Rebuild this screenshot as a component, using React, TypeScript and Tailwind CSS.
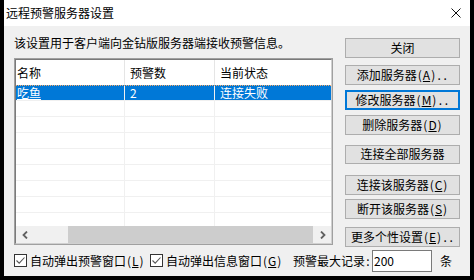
import type { ReactNode } from 'react';

const font = "font-['Noto_Sans_CJK_SC','Noto_Sans_CJK_JP',sans-serif]";

// half-width cell like the bitmap font of the original dialog
function H({ children }: { children: ReactNode }) {
  return <span className="inline-block w-[6px] text-center">{children}</span>;
}

function Mn({ k, dots }: { k: string; dots?: boolean }) {
  return (
    <>
      <H>(</H>
      <span className="inline-block min-w-[6px] text-center underline">{k}</span>
      <H>)</H>
      {dots && (
        <>
          <H>.</H>
          <H>.</H>
        </>
      )}
    </>
  );
}

function Btn({ children, focused, className = '' }: { children: ReactNode; focused?: boolean; className?: string }) {
  return (
    <div
      className={`flex h-[20px] w-[115px] items-center justify-center whitespace-nowrap bg-[#e1e1e1] text-[12px] leading-none text-black ${
        focused ? 'border-2 border-[#0078d7]' : 'border border-[#adadad]'
      } ${className}`}
    >
      {children}
    </div>
  );
}

function CheckBox() {
  return (
    <div className="flex h-[13px] w-[13px] shrink-0 items-center justify-center border border-[#333333] bg-white">
      <svg width="11" height="11" viewBox="0 0 11 11">
        <path d="M1.5 5.5 L4.2 8.2 L9.5 2.5" fill="none" stroke="#555555" strokeWidth="1.1" />
      </svg>
    </div>
  );
}

function Row({ selected }: { selected?: boolean }) {
  return (
    <div
      className={`flex h-[16px] shrink-0 border-b border-[#f0f0f0] text-[12px] leading-none ${
        selected ? 'bg-[#0078d7] text-white' : ''
      }`}
    >
      <div className="flex w-[109px] items-center border-r border-[#f0f0f0] pl-[1px]">
        {selected && <span className="underline">吃鱼</span>}
      </div>
      <div className="flex w-[90px] items-center border-r border-[#f0f0f0] pl-[5px]">{selected && '2'}</div>
      <div className="flex flex-1 items-center pl-[5px]">{selected && '连接失败'}</div>
    </div>
  );
}

export default function App() {
  return (
    <div className={`flex h-[280px] w-[474px] bg-black pl-[4px] ${font}`}>
      <div className="flex h-[276px] w-[466px] flex-col">
        {/* Title bar */}
        <div className="flex h-[26px] items-center justify-between bg-white pl-[2px] pr-[9px]">
          <span className="text-[12px] leading-none text-black">远程预警服务器设置</span>
          <svg width="10" height="10" viewBox="0 0 10 10">
            <path d="M0.5 0.5 L9.5 9.5 M9.5 0.5 L0.5 9.5" stroke="#111111" strokeWidth="1" />
          </svg>
        </div>

        {/* Body */}
        <div className="flex flex-1 flex-col bg-[#f0f0f0] pl-[10px] text-black">
          <div className="flex h-[221px]">
            {/* Left column */}
            <div className="flex w-[319px] flex-col">
              <p className="mt-[9px] whitespace-nowrap text-[12px] leading-[16px]">
                该设置用于客户端向金钻版服务器端接收预警信息。
              </p>
              <div className="mt-[7px] h-[187px] border border-[#a0a0a0] bg-white">
                <div className="flex h-full flex-col border border-[#7a7a7a] border-b-[#d0d0d0] border-r-[#d0d0d0]">
                  {/* Header */}
                  <div className="flex h-[25px] shrink-0 text-[12px] leading-none">
                    <div className="flex w-[109px] items-center border-r border-[#e5e5e5] pl-[1px]">名称</div>
                    <div className="flex w-[90px] items-center border-r border-[#e5e5e5] pl-[5px]">预警数</div>
                    <div className="flex flex-1 items-center pl-[5px]">当前状态</div>
                  </div>
                  {/* Rows */}
                  <div className="relative flex flex-1 flex-col overflow-hidden">
                    <div className="pointer-events-none absolute left-0 right-0 top-0 border-t border-dotted border-[#f3a96a]" />
                    <Row selected />
                    <Row />
                    <Row />
                    <Row />
                    <Row />
                    <Row />
                    <Row />
                    <Row />
                    <Row />
                  </div>
                  {/* Horizontal scrollbar */}
                  <div className="flex h-[17px] shrink-0 items-center bg-[#f0f0f0]">
                    <div className="flex h-full w-[17px] items-center justify-center">
                      <svg width="6" height="8" viewBox="0 0 6 8">
                        <path d="M5 0.5 L1.5 4 L5 7.5" fill="none" stroke="#606060" strokeWidth="1.8" />
                      </svg>
                    </div>
                    <div className="ml-[35px] h-full w-[245px] bg-[#cdcdcd]" />
                    <div className="flex-1" />
                    <div className="flex h-full w-[17px] items-center justify-center">
                      <svg width="6" height="8" viewBox="0 0 6 8">
                        <path d="M1 0.5 L4.5 4 L1 7.5" fill="none" stroke="#606060" strokeWidth="1.8" />
                      </svg>
                    </div>
                  </div>
                </div>
              </div>
            </div>

            {/* Right column */}
            <div className="ml-[12px] flex w-[115px] flex-col pt-[12px]">
              <Btn>关闭</Btn>
              <Btn className="mt-[7px]">
                添加服务器<Mn k="A" dots />
              </Btn>
              <Btn focused className="mt-[5px]">
                修改服务器<Mn k="M" dots />
              </Btn>
              <Btn className="mt-[5px]">
                删除服务器<Mn k="D" />
              </Btn>
              <Btn className="mt-[10px]">连接全部服务器</Btn>
              <Btn className="mt-[11px]">
                连接该服务器<Mn k="C" />
              </Btn>
              <Btn className="mt-[4px]">
                断开该服务器<Mn k="S" />
              </Btn>
              <Btn className="mt-[8px]">
                更多个性设置<Mn k="E" dots />
              </Btn>
            </div>
          </div>

          {/* Bottom options */}
          <div className="mt-[2px] flex h-[23px] items-center text-[12px] leading-none">
            <CheckBox />
            <span className="ml-[3px] w-[120px] whitespace-nowrap">
              自动弹出预警窗口<Mn k="L" />
            </span>
            <CheckBox />
            <span className="ml-[3px] w-[127px] whitespace-nowrap">
              自动弹出信息窗口<Mn k="G" />
            </span>
            <span className="w-[79px] whitespace-nowrap">
              预警最大记录<H>:</H>
            </span>
            <div className="flex h-[22px] w-[60px] items-center border border-[#7a7a7a] bg-white pl-[1px]">200</div>
            <span className="ml-[8px]">条</span>
          </div>
        </div>
      </div>
    </div>
  );
}
